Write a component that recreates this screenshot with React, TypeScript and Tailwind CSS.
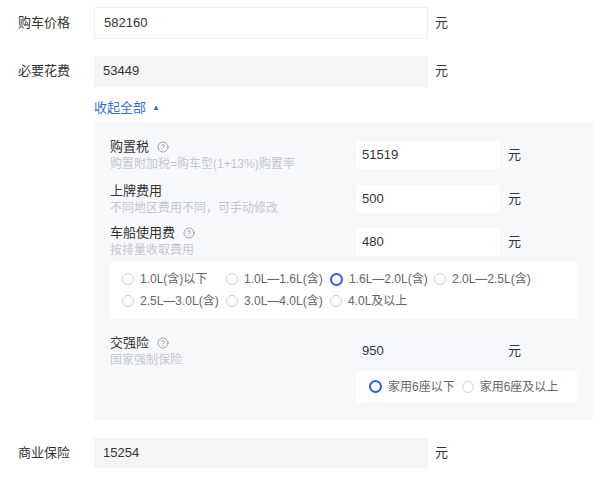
import { CircleHelp } from 'lucide-react'

const font = { fontFamily: '"Liberation Sans", "Noto Sans CJK SC", sans-serif' }

function Radio({ label, checked }: { label: string; checked?: boolean }) {
  return (
    <div className="flex items-center gap-[6px]">
      {checked ? (
        <span className="w-[13px] h-[13px] rounded-full border-[2.5px] border-[#2a62e0] bg-white shrink-0" />
      ) : (
        <span className="w-[12px] h-[12px] rounded-full border border-[#d0d0d0] bg-white shrink-0" />
      )}
      <span className="text-[12px] text-[#666] whitespace-nowrap">{label}</span>
    </div>
  )
}

function FeeRow({ title, sub, value, help, height }: { title: string; sub: string; value: string; help?: boolean; height: string }) {
  return (
    <div className={`flex items-center ${height}`}>
      <div className="w-[262px] pl-4">
        <div className="flex items-center text-[13px] leading-[18px] text-[#333]">
          {title}
          {help && <CircleHelp size={12} strokeWidth={1.5} className="ml-[8px] text-[#888]" />}
        </div>
        <div className="text-[12px] leading-[17px] text-[#c4c7cc]">{sub}</div>
      </div>
      <div className="w-[144px] h-[28px] bg-white flex items-center pl-[6px] text-[13px] text-[#333]">{value}</div>
      <span className="ml-[8px] text-[13px] text-[#333]">元</span>
    </div>
  )
}

export default function App() {
  const sizes = ['1.0L(含)以下', '1.0L—1.6L(含)', '1.6L—2.0L(含)', '2.0L—2.5L(含)', '2.5L—3.0L(含)', '3.0L—4.0L(含)', '4.0L及以上']
  return (
    <div className="w-[600px] h-[477px] bg-white pt-[7px]" style={font}>
      <div className="flex items-center h-8">
        <div className="w-[94px] pl-[18px] text-[13px] text-[#333]">购车价格</div>
        <div className="w-[334px] h-8 border border-[#f0f0f0] bg-white flex items-center pl-[9px] text-[13px] text-[#333]">582160</div>
        <span className="ml-[7px] text-[13px] text-[#333]">元</span>
      </div>
      <div className="flex items-center h-8 mt-4">
        <div className="w-[94px] pl-[18px] text-[13px] text-[#333]">必要花费</div>
        <div className="w-[334px] h-[31px] bg-[#f5f5f5] flex items-center pl-[9px] text-[13px] text-[#333]">53449</div>
        <span className="ml-[7px] text-[13px] text-[#333]">元</span>
      </div>
      <div className="pl-[94px] pt-[12px] pb-[5px] leading-[18px] flex items-center text-[13px] text-[#3a6bd9]">
        收起全部<span className="ml-[6px] text-[8px]">▲</span>
      </div>
      <div className="ml-[94px] w-[499px] bg-[#f7f8fa] pt-[11px] pb-[18px]">
        <FeeRow title="购置税" sub="购置附加税=购车型(1+13%)购置率" value="51519" help height="h-[44px]" />
        <FeeRow title="上牌费用" sub="不同地区费用不同，可手动修改" value="500" height="h-[44px]" />
        <FeeRow title="车船使用费" sub="按排量收取费用" value="480" help height="h-[41px]" />
        <div className="ml-4 w-[467px] bg-white pl-3 pt-[6px] pb-[7px] grid grid-cols-[104px_104px_104px_104px] auto-rows-[22px] items-center">
          {sizes.map((s, i) => (
            <Radio key={s} label={s} checked={i === 2} />
          ))}
        </div>
        <div className="flex items-center h-[28px] mt-[18px]">
          <div className="w-[262px] pl-4">
            <div className="flex items-center text-[13px] leading-[18px] text-[#333]">
              交强险
              <CircleHelp size={12} strokeWidth={1.5} className="ml-[8px] text-[#888]" />
            </div>
            <div className="text-[12px] leading-[17px] text-[#c4c7cc]">国家强制保险</div>
          </div>
          <div className="w-[144px] h-[28px] bg-[#f5f7fa] flex items-center pl-[6px] text-[13px] text-[#333]">950</div>
          <span className="ml-[8px] text-[13px] text-[#333]">元</span>
        </div>
        <div className="ml-[262px] mt-[6px] w-[221px] h-[31px] bg-white pl-[13px] flex items-center gap-[7px]">
          <Radio label="家用6座以下" checked />
          <Radio label="家用6座及以上" />
        </div>
      </div>
      <div className="flex items-center h-[30px] mt-[18px]">
        <div className="w-[94px] pl-[18px] text-[13px] text-[#333]">商业保险</div>
        <div className="w-[334px] h-[30px] bg-[#f5f5f5] flex items-center pl-[9px] text-[13px] text-[#333]">15254</div>
        <span className="ml-[7px] text-[13px] text-[#333]">元</span>
      </div>
    </div>
  )
}
